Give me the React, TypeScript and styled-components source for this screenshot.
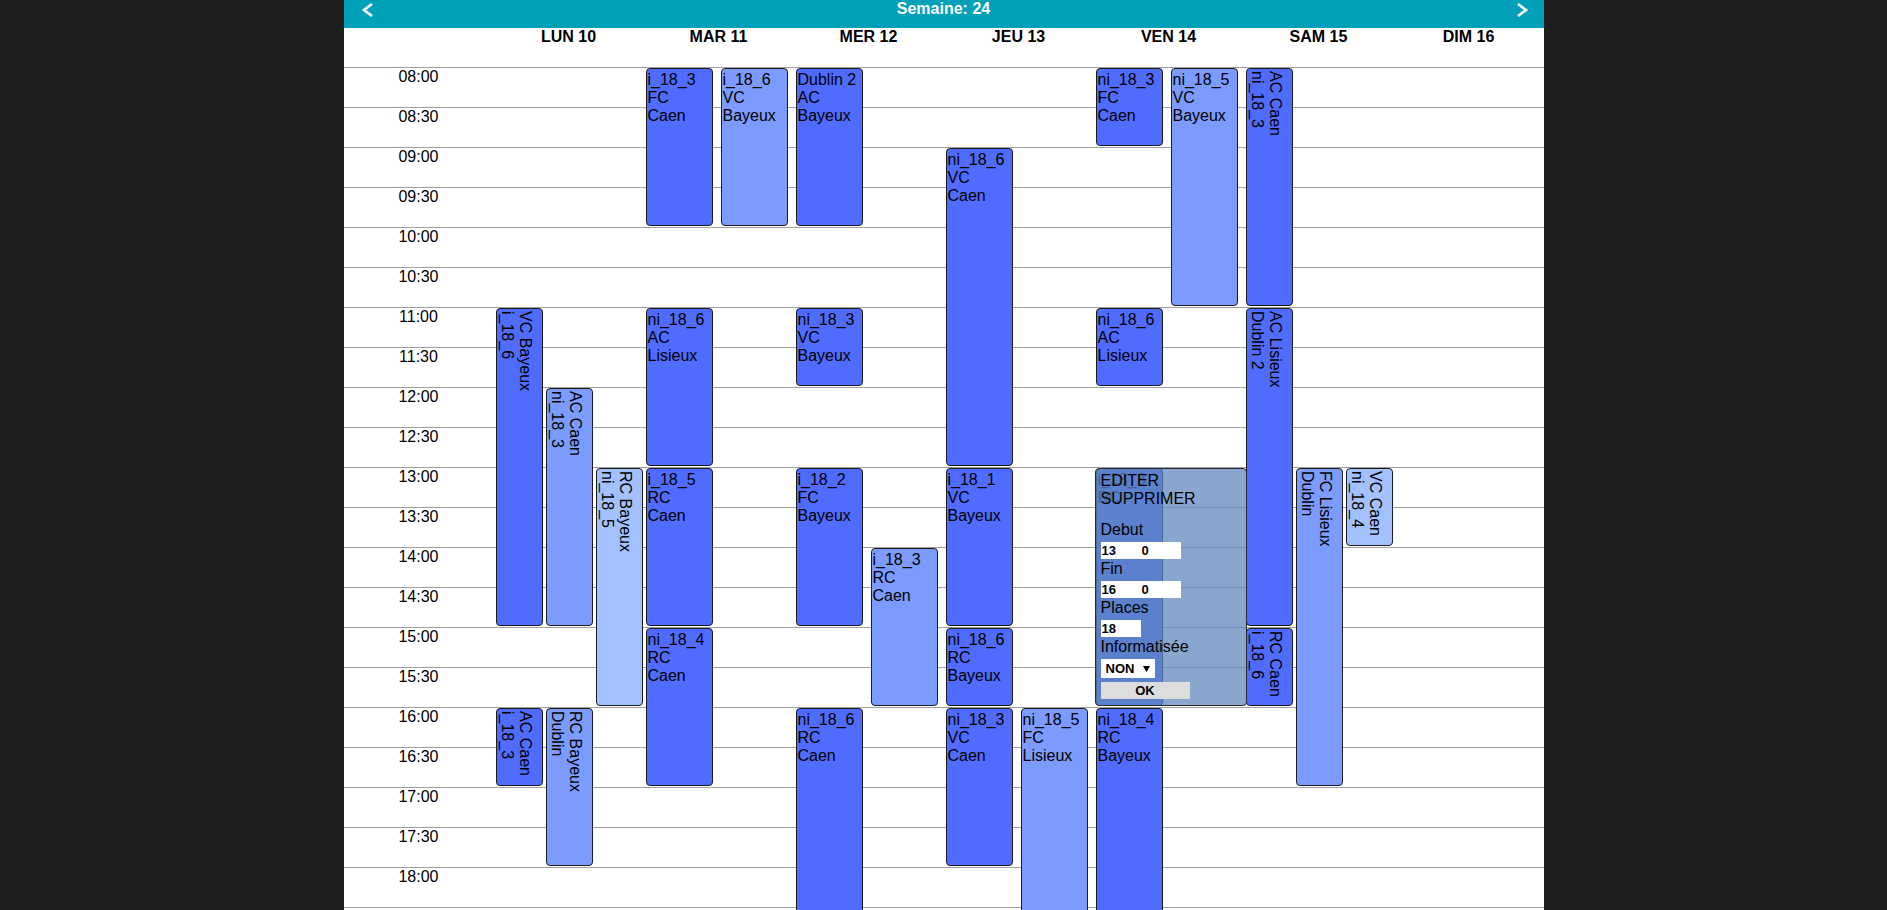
import React from "react";
import styled, { createGlobalStyle } from "styled-components";

const GlobalStyle = createGlobalStyle`
  html, body {
    margin: 0;
    padding: 0;
    background: #1e1e1e;
    overflow: hidden;
  }
  body {
    font-family: "Liberation Sans", Arial, sans-serif;
  }
  *, *::before, *::after {
    box-sizing: border-box;
  }
`;

const COL_W = 150;
const ROW_H = 40;
const FIRST_HOUR = 8;
const ROW_COUNT = 24;
const HOUR_PX = ROW_H * 2;

type Tone = "dark" | "light" | "pale";

const TONES: Record<Tone, string> = {
  dark: "#4f6cff",
  light: "#7b9bff",
  pale: "#a3c0ff",
};

interface CalEvent {
  day: number;
  n: number;
  sub: number;
  start: number;
  end: number;
  tone: Tone;
  group: string;
  kind: string;
  city: string;
}

const DAYS = ["LUN 10", "MAR 11", "MER 12", "JEU 13", "VEN 14", "SAM 15", "DIM 16"];

const EVENTS: CalEvent[] = [
  // LUN
  { day: 0, n: 3, sub: 0, start: 11, end: 15, tone: "dark", group: "i_18_6", kind: "VC", city: "Bayeux" },
  { day: 0, n: 3, sub: 1, start: 12, end: 15, tone: "light", group: "ni_18_3", kind: "AC", city: "Caen" },
  { day: 0, n: 3, sub: 2, start: 13, end: 16, tone: "pale", group: "ni_18_5", kind: "RC", city: "Bayeux" },
  { day: 0, n: 3, sub: 0, start: 16, end: 17, tone: "dark", group: "i_18_3", kind: "AC", city: "Caen" },
  { day: 0, n: 3, sub: 1, start: 16, end: 18, tone: "light", group: "Dublin", kind: "RC", city: "Bayeux" },
  // MAR
  { day: 1, n: 2, sub: 0, start: 8, end: 10, tone: "dark", group: "i_18_3", kind: "FC", city: "Caen" },
  { day: 1, n: 2, sub: 1, start: 8, end: 10, tone: "light", group: "i_18_6", kind: "VC", city: "Bayeux" },
  { day: 1, n: 2, sub: 0, start: 11, end: 13, tone: "dark", group: "ni_18_6", kind: "AC", city: "Lisieux" },
  { day: 1, n: 2, sub: 0, start: 13, end: 15, tone: "dark", group: "i_18_5", kind: "RC", city: "Caen" },
  { day: 1, n: 2, sub: 0, start: 15, end: 17, tone: "dark", group: "ni_18_4", kind: "RC", city: "Caen" },
  // MER
  { day: 2, n: 2, sub: 0, start: 8, end: 10, tone: "dark", group: "Dublin 2", kind: "AC", city: "Bayeux" },
  { day: 2, n: 2, sub: 0, start: 11, end: 12, tone: "dark", group: "ni_18_3", kind: "VC", city: "Bayeux" },
  { day: 2, n: 2, sub: 0, start: 13, end: 15, tone: "dark", group: "i_18_2", kind: "FC", city: "Bayeux" },
  { day: 2, n: 2, sub: 1, start: 14, end: 16, tone: "light", group: "i_18_3", kind: "RC", city: "Caen" },
  { day: 2, n: 2, sub: 0, start: 16, end: 19, tone: "dark", group: "ni_18_6", kind: "RC", city: "Caen" },
  // JEU
  { day: 3, n: 2, sub: 0, start: 9, end: 13, tone: "dark", group: "ni_18_6", kind: "VC", city: "Caen" },
  { day: 3, n: 2, sub: 0, start: 13, end: 15, tone: "dark", group: "i_18_1", kind: "VC", city: "Bayeux" },
  { day: 3, n: 2, sub: 0, start: 15, end: 16, tone: "dark", group: "ni_18_6", kind: "RC", city: "Bayeux" },
  { day: 3, n: 2, sub: 0, start: 16, end: 18, tone: "dark", group: "ni_18_3", kind: "VC", city: "Caen" },
  { day: 3, n: 2, sub: 1, start: 16, end: 19, tone: "light", group: "ni_18_5", kind: "FC", city: "Lisieux" },
  // VEN
  { day: 4, n: 2, sub: 0, start: 8, end: 9, tone: "dark", group: "ni_18_3", kind: "FC", city: "Caen" },
  { day: 4, n: 2, sub: 1, start: 8, end: 11, tone: "light", group: "ni_18_5", kind: "VC", city: "Bayeux" },
  { day: 4, n: 2, sub: 0, start: 11, end: 12, tone: "dark", group: "ni_18_6", kind: "AC", city: "Lisieux" },
  { day: 4, n: 2, sub: 0, start: 13, end: 16, tone: "dark", group: "i_18_3", kind: "RC", city: "" },
  { day: 4, n: 2, sub: 0, start: 16, end: 19, tone: "dark", group: "ni_18_4", kind: "RC", city: "Bayeux" },
  // SAM
  { day: 5, n: 3, sub: 0, start: 8, end: 11, tone: "dark", group: "ni_18_3", kind: "AC", city: "Caen" },
  { day: 5, n: 3, sub: 0, start: 11, end: 15, tone: "dark", group: "Dublin 2", kind: "AC", city: "Lisieux" },
  { day: 5, n: 3, sub: 0, start: 15, end: 16, tone: "dark", group: "i_18_6", kind: "RC", city: "Caen" },
  { day: 5, n: 3, sub: 1, start: 13, end: 17, tone: "light", group: "Dublin", kind: "FC", city: "Lisieux" },
  { day: 5, n: 3, sub: 2, start: 13, end: 14, tone: "pale", group: "ni_18_4", kind: "VC", city: "Caen" },
];

const EDIT_TARGET = { day: 4, start: 13, end: 16 };

/* ---------- layout ---------- */

const Page = styled.div`
  width: ${COL_W * 8}px;
  margin: 0 auto;
  min-height: 100vh;
  background: #ffffff;
`;

const TopBar = styled.header`
  display: grid;
  grid-template-columns: 1fr auto 1fr;
  align-items: start;
  height: 28px;
  background: #00a0b8;
  color: #ffffff;
`;

const NavButton = styled.button<{ $side: "left" | "right" }>`
  justify-self: ${(p) => (p.$side === "left" ? "start" : "end")};
  margin: 3px ${(p) => (p.$side === "right" ? "15px" : "0")} 0
    ${(p) => (p.$side === "left" ? "17px" : "0")};
  padding: 0;
  border: 0;
  background: none;
  line-height: 0;
  cursor: pointer;
`;

const WeekTitle = styled.div`
  font-size: 16px;
  font-weight: bold;
  line-height: normal;
  white-space: nowrap;
`;

const DayHeader = styled.div`
  display: grid;
  grid-template-columns: repeat(8, ${COL_W}px);
  height: 39px;
`;

const DayLabel = styled.div`
  font-size: 16px;
  font-weight: bold;
  line-height: normal;
  color: #000000;
  text-align: center;
`;

const Schedule = styled.div`
  display: grid;
  grid-template-columns: repeat(8, ${COL_W}px);
  grid-template-rows: ${ROW_H * ROW_COUNT}px;
`;

const RowStack = styled.div`
  grid-column: 1 / -1;
  grid-row: 1;
  display: flex;
  flex-direction: column;
`;

const SlotRow = styled.div`
  height: ${ROW_H}px;
  border-top: 1px solid #a0a0a0;
  display: flex;
`;

const TimeLabel = styled.div`
  width: ${COL_W}px;
  font-size: 16px;
  line-height: normal;
  color: #000000;
  text-align: center;
`;

const DayColumn = styled.div<{ $col: number }>`
  grid-row: 1;
  grid-column: ${(p) => p.$col};
  position: relative;
`;

const EventCard = styled.div<{ $tone: Tone; $vertical: boolean }>`
  position: absolute;
  padding: 2px 1px;
  border: 1px solid #1c1c1c;
  border-radius: 4px;
  background: ${(p) => TONES[p.$tone]};
  color: #000000;
  font-size: 16px;
  line-height: normal;
  overflow: hidden;
  writing-mode: ${(p) => (p.$vertical ? "vertical-lr" : "horizontal-tb")};
`;

const EventLine = styled.div`
  white-space: nowrap;
`;

/* ---------- edit popup ---------- */

const EditPopup = styled.div`
  position: absolute;
  z-index: 2;
  display: flex;
  flex-direction: column;
  align-items: flex-start;
  padding: 3px 5px 0 5px;
  border: 1px solid #2a2a2a;
  border-radius: 4px;
  background: rgba(94, 135, 189, 0.74);
  color: #000000;
  font-size: 16px;
  line-height: 18px;
`;

const MenuAction = styled.div`
  cursor: pointer;
`;

const Spacer = styled.div`
  height: 13px;
`;

const FieldLabel = styled.div``;

const FieldRow = styled.div`
  display: flex;
  margin: 3px 0 1px;
`;

const NumberInput = styled.input`
  width: 40px;
  height: 17px;
  padding: 0 0 0 1px;
  border: 0;
  border-radius: 0;
  outline: none;
  background: #ffffff;
  color: #000000;
  font-family: "Liberation Sans", Arial, sans-serif;
  font-size: 13px;
  font-weight: bold;
`;

const SelectWrap = styled.div`
  position: relative;
  width: 54px;
  height: 19px;
  margin-top: 3px;
`;

const ChoiceSelect = styled.select`
  appearance: none;
  -webkit-appearance: none;
  display: block;
  width: 100%;
  height: 100%;
  padding: 0 0 0 5px;
  border: 0;
  border-radius: 0;
  outline: none;
  background: #ffffff;
  color: #000000;
  font-family: "Liberation Sans", Arial, sans-serif;
  font-size: 13px;
  font-weight: bold;
`;

const SelectArrow = styled.svg`
  position: absolute;
  right: 5px;
  top: 7px;
  pointer-events: none;
`;

const OkButton = styled.button`
  width: 89px;
  height: 17px;
  margin-top: 4px;
  padding: 0;
  border: 0;
  border-radius: 0;
  background: #dddddd;
  color: #000000;
  font-family: "Liberation Sans", Arial, sans-serif;
  font-size: 13px;
  font-weight: bold;
  line-height: 17px;
  text-align: center;
`;

/* ---------- helpers ---------- */

const pad = (v: number) => String(v).padStart(2, "0");

const slotLabel = (i: number) => {
  const minutes = FIRST_HOUR * 60 + i * 30;
  return `${pad(Math.floor(minutes / 60))}:${pad(minutes % 60)}`;
};

const eventBox = (e: { start: number; end: number }) => ({
  top: (e.start - FIRST_HOUR) * HOUR_PX + 1,
  height: (e.end - e.start) * HOUR_PX - 2,
});

const Chevron = ({ dir }: { dir: "left" | "right" }) => (
  <svg width="13" height="14" viewBox="0 0 13 14" aria-hidden="true">
    <path
      d={dir === "left" ? "M11 1 L3 7 L11 13" : "M2 1 L10 7 L2 13"}
      fill="none"
      stroke="#ffffff"
      strokeWidth="2.6"
    />
  </svg>
);

const Event = ({ ev }: { ev: CalEvent }) => {
  const vertical = ev.n >= 3;
  const subW = COL_W / ev.n;
  const width = vertical ? 47 : 67;
  const lines = vertical
    ? [ev.group, `${ev.kind} ${ev.city}`.trim()]
    : [ev.group, ev.kind, ev.city].filter(Boolean);
  return (
    <EventCard
      $tone={ev.tone}
      $vertical={vertical}
      style={{ ...eventBox(ev), left: ev.sub * subW + 2, width }}
    >
      {lines.map((l, i) => (
        <EventLine key={i}>{l}</EventLine>
      ))}
    </EventCard>
  );
};

const EditForm = () => (
  <EditPopup style={{ ...eventBox(EDIT_TARGET), left: 1, width: 152 }}>
    <MenuAction>EDITER</MenuAction>
    <MenuAction>SUPPRIMER</MenuAction>
    <Spacer />
    <FieldLabel>Debut</FieldLabel>
    <FieldRow>
      <NumberInput readOnly value="13" />
      <NumberInput readOnly value="0" />
    </FieldRow>
    <FieldLabel>Fin</FieldLabel>
    <FieldRow>
      <NumberInput readOnly value="16" />
      <NumberInput readOnly value="0" />
    </FieldRow>
    <FieldLabel>Places</FieldLabel>
    <FieldRow>
      <NumberInput readOnly value="18" />
    </FieldRow>
    <FieldLabel>Informatisée</FieldLabel>
    <SelectWrap>
      <ChoiceSelect defaultValue="NON">
        <option value="NON">NON</option>
        <option value="OUI">OUI</option>
      </ChoiceSelect>
      <SelectArrow width="7" height="6" viewBox="0 0 7 6" aria-hidden="true">
        <polygon points="0,0 7,0 3.5,6" fill="#000000" />
      </SelectArrow>
    </SelectWrap>
    <OkButton type="button">OK</OkButton>
  </EditPopup>
);

export default function App() {
  return (
    <>
      <GlobalStyle />
      <Page>
        <TopBar>
          <NavButton $side="left" aria-label="Semaine précédente">
            <Chevron dir="left" />
          </NavButton>
          <WeekTitle>Semaine: 24</WeekTitle>
          <NavButton $side="right" aria-label="Semaine suivante">
            <Chevron dir="right" />
          </NavButton>
        </TopBar>

        <DayHeader>
          <div />
          {DAYS.map((d) => (
            <DayLabel key={d}>{d}</DayLabel>
          ))}
        </DayHeader>

        <Schedule>
          <RowStack>
            {Array.from({ length: ROW_COUNT }, (_, i) => (
              <SlotRow key={i}>
                <TimeLabel>{slotLabel(i)}</TimeLabel>
              </SlotRow>
            ))}
          </RowStack>
          {DAYS.map((d, di) => (
            <DayColumn key={d} $col={di + 2}>
              {EVENTS.filter((e) => e.day === di).map((e, i) => (
                <Event key={i} ev={e} />
              ))}
              {di === EDIT_TARGET.day && <EditForm />}
            </DayColumn>
          ))}
        </Schedule>
      </Page>
    </>
  );
}
